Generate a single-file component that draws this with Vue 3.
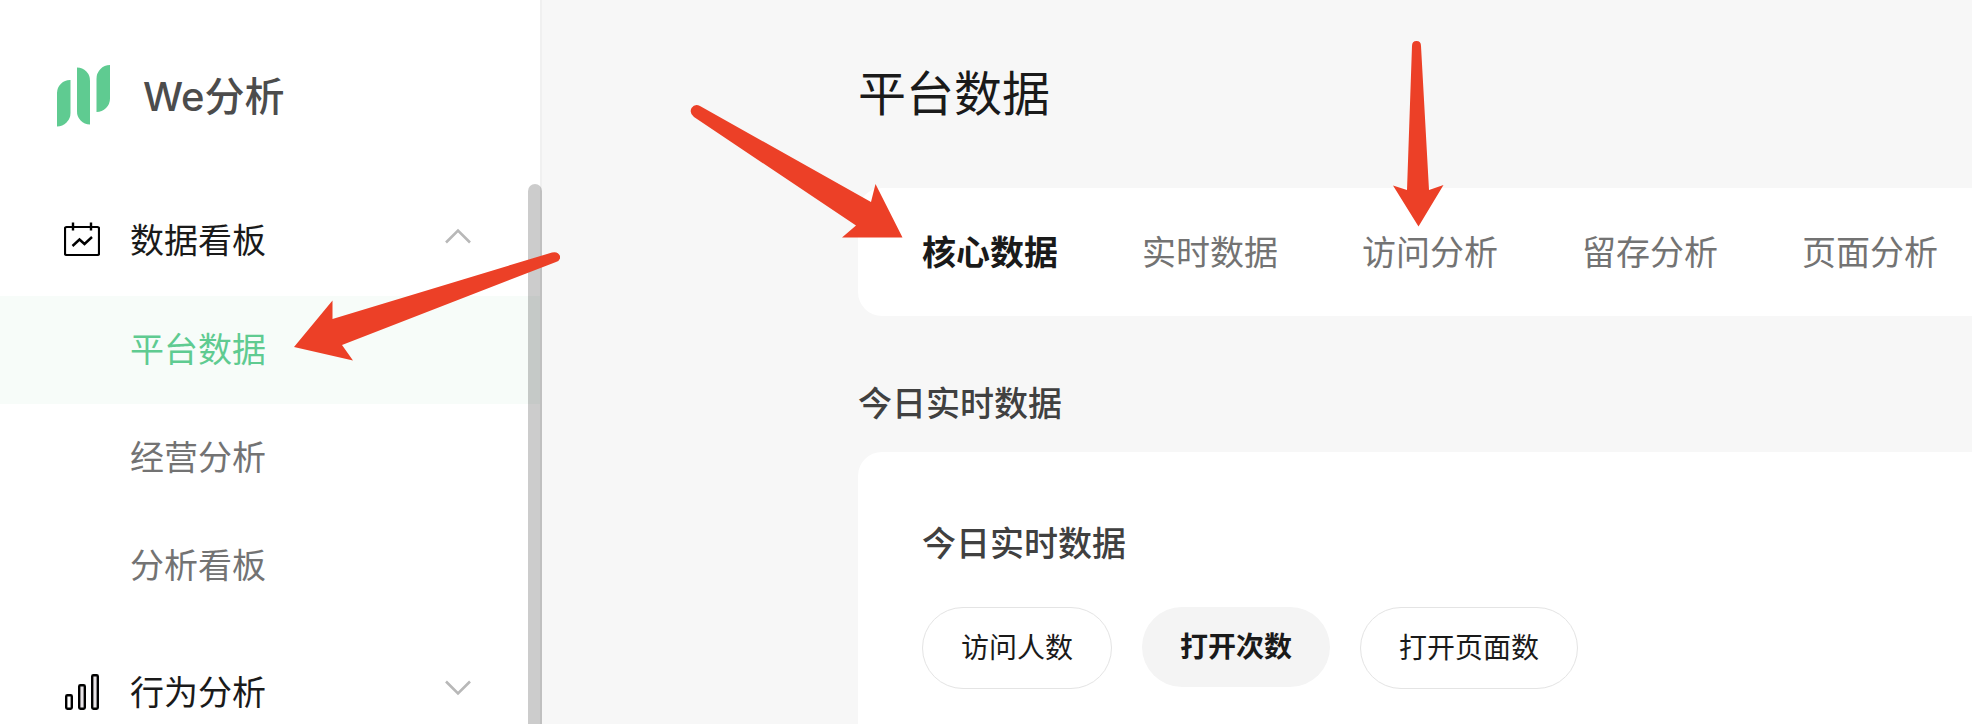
<template>
  <div class="layout">
    <aside class="sidebar">
      <a href="#" class="brand">
        <svg class="brand-logo" width="54" height="64" viewBox="0 0 54 64" fill="#5fcb91">
          <path d="M1 62.5V29A13 13 0 0 1 14.500 16V49A13.500 13.500 0 0 1 1 62.500Z" />
          <path d="M21 3.500A13 13 0 0 1 34 17V60.500A13 13 0 0 1 21 47Z" />
          <path d="M40.500 48V15A13.500 13.500 0 0 1 54 1V34.500A13.500 13.500 0 0 1 40.500 48Z" />
        </svg>
        <span class="brand-name">We分析</span>
      </a>

      <!-- 侧边菜单 -->
      <nav class="menu">
        <div v-for="group in menuGroups" :key="group.name" class="menu-group">
          <button class="menu-header" :aria-expanded="group.open" @click="group.open = !group.open">
            <svg v-if="group.icon === 'board'" class="menu-icon" width="36" height="36" viewBox="0 0 36 36" fill="none" stroke="#000">
              <rect x="1" y="5" width="34" height="28" rx="1.500" stroke-width="2.200" />
              <path d="M9 0.500V8.500M27 0.500V8.500" stroke-width="2.400" />
              <path d="M8.500 24L15.500 17.500L20.500 22L28 15" stroke-width="2.400" />
            </svg>
            <svg v-else class="menu-icon" width="36" height="36" viewBox="0 0 36 36" fill="none" stroke="#000" stroke-width="2.400">
              <rect x="2.200" y="21.200" width="5.600" height="13.600" rx="1.200" />
              <rect x="15.200" y="11.200" width="5.600" height="23.600" rx="1.200" fill="#e8e4e7" />
              <rect x="28.200" y="1.200" width="5.600" height="33.600" rx="1.200" fill="#e8e4e7" />
            </svg>
            <span class="menu-title">{{ group.name }}</span>
            <svg class="menu-chevron" :class="{ open: group.open }" width="26" height="16" viewBox="0 0 26 16" fill="none">
              <path d="M1 1.500L13 13.500L25 1.500" stroke="#b8b8b8" stroke-width="2.600" />
            </svg>
          </button>
          <ul v-if="group.open" class="menu-list">
            <li v-for="item in group.items" :key="item">
              <a
                href="#"
                class="menu-item"
                :class="{ active: item === activeMenu }"
                @click.prevent="activeMenu = item"
              >{{ item }}</a>
            </li>
          </ul>
        </div>
        <span class="scroll-thumb"></span>
      </nav>
    </aside>

    <main class="content">
      <h1 class="page-title">平台数据</h1>

      <div class="tabs" role="tablist">
        <button
          v-for="tab in tabs"
          :key="tab"
          role="tab"
          class="tab"
          :class="{ active: tab === activeTab }"
          :aria-selected="tab === activeTab"
          @click="activeTab = tab"
        >{{ tab }}</button>
      </div>

      <h2 class="section-title">今日实时数据</h2>

      <section class="card">
        <h3 class="card-title">今日实时数据</h3>
        <div class="pills">
          <button
            v-for="metric in metrics"
            :key="metric"
            class="pill"
            :class="{ active: metric === activeMetric }"
            @click="activeMetric = metric"
          >{{ metric }}</button>
        </div>
      </section>
    </main>

    <!-- 操作指引箭头 -->
    <svg class="guide guide-menu" width="270" height="112" viewBox="0 0 270 112">
      <path d="M4 97L42.500 50.500V69L262 2.500Q268 1 270 6Q271 10 266 12L52 95L63 110.500Z" />
    </svg>
    <svg class="guide guide-core" width="214" height="134" viewBox="0 0 214 134">
      <path d="M10 2L181 98L185.500 80L212.500 133.500H152L166 121.500L4 13Q-1 9 1.500 4Q5 -1 10 2Z" />
    </svg>
    <svg class="guide guide-visit" width="52" height="188" viewBox="0 0 52 188">
      <path d="M20 6Q20 1 24.500 1Q29 1 29 6L37 150L51.500 145L26.500 186.500L1 145.500L15 150Z" />
    </svg>
  </div>
</template>

<script setup>
import { ref } from 'vue'

const menuGroups = ref([
  { name: '数据看板', icon: 'board', open: true, items: ['平台数据', '经营分析', '分析看板'] },
  { name: '行为分析', icon: 'bars', open: false, items: [] }
])
const activeMenu = ref('平台数据')

const tabs = ['核心数据', '实时数据', '访问分析', '留存分析', '页面分析']
const activeTab = ref('核心数据')

const metrics = ['访问人数', '打开次数', '打开页面数']
const activeMetric = ref('打开次数')
</script>

<style>
body {
  margin: 0;
  background-color: #f7f7f7;
}
</style>

<style scoped>
.layout {
  position: relative;
  display: flex;
  height: 100vh;
  overflow: hidden;
  background-color: #f7f7f7;
  font-family: Inter, 'Noto Sans CJK SC', sans-serif;
  color: #1a1a1a;
}

button {
  border: none;
  background: none;
  font-family: inherit;
  color: inherit;
  white-space: nowrap;
  cursor: pointer;
}

.sidebar {
  display: flex;
  flex-direction: column;
  flex-shrink: 0;
  width: 540px;
  border-right: 2px solid #f0f0f0;
  background-color: #ffffff;
}

.brand {
  display: flex;
  align-items: center;
  gap: 33px;
  height: 64px;
  padding: 64px 56px 56px;
  text-decoration: none;
}

.brand-name {
  padding-bottom: 4px;
  font-size: 40px;
  font-weight: 500;
  color: #4c4c4c;
}

.menu {
  position: relative;
  flex: 1;
  min-height: 0;
}

.menu-group {
  margin-bottom: 16px;
}

.menu-header {
  display: flex;
  align-items: center;
  width: 100%;
  height: 112px;
  padding: 0 69px 0 64px;
}

.menu-title {
  flex: 1;
  margin-left: 30px;
  padding-bottom: 4px;
  font-size: 34px;
  font-weight: 400;
  text-align: left;
}

.menu-chevron {
  margin-bottom: 8px;
}

.menu-chevron.open {
  transform: rotate(180deg);
}

.menu-list {
  margin: 0;
  padding: 0;
  list-style: none;
}

.menu-item {
  display: block;
  padding-left: 130px;
  font-size: 34px;
  line-height: 108px;
  color: #737373;
  text-decoration: none;
}

.menu-item.active {
  background-color: #f7fcf9;
  color: #5fcb91;
}

.scroll-thumb {
  position: absolute;
  top: 0;
  right: -2px;
  bottom: -20px;
  width: 14px;
  border-radius: 7px;
  background-color: rgba(0, 0, 0, 0.2);
}

.content {
  flex: 1;
  min-width: 0;
  padding: 64px 0 0 316px;
}

.page-title {
  margin: 0 0 64px;
  font-size: 48px;
  font-weight: 400;
  line-height: 60px;
}

.tabs {
  display: flex;
  align-items: center;
  gap: 84px;
  height: 128px;
  padding-left: 64px;
  border-radius: 24px 0 0 24px;
  background-color: #ffffff;
  overflow: hidden;
}

.tab {
  padding: 0 0 4px;
  font-size: 34px;
  color: #737373;
}

.tab.active {
  font-weight: 700;
  color: #1a1a1a;
}

.section-title,
.card-title {
  margin: 0;
  font-size: 34px;
  font-weight: 500;
  line-height: 48px;
  color: #404040;
}

.section-title {
  padding: 64px 0 24px;
}

.card {
  height: 100%;
  padding: 68px 64px;
  border-radius: 24px 0 0 0;
  background-color: #ffffff;
}

.pills {
  display: flex;
  align-items: flex-start;
  gap: 30px;
  margin-top: 39px;
}

.pill {
  padding: 0 38px;
  border: 1px solid #e4e4e4;
  border-radius: 41px;
  font-size: 28px;
  line-height: 80px;
}

.pill.active {
  border: none;
  background-color: #f4f4f4;
  font-weight: 700;
}

.guide {
  position: absolute;
  fill: #ec4027;
  pointer-events: none;
}

.guide-menu {
  left: 290px;
  top: 250px;
}

.guide-core {
  left: 690px;
  top: 104px;
}

.guide-visit {
  left: 1392px;
  top: 40px;
}
</style>
